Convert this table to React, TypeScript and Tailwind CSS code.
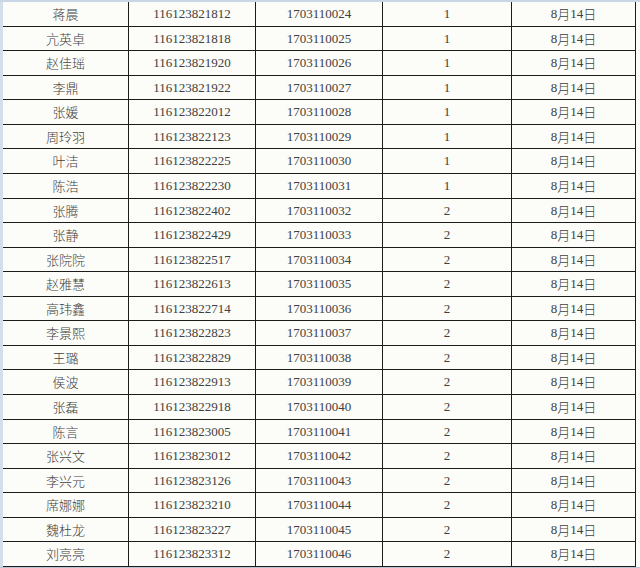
const rows: [string, string, string, string][] = [
  ["蒋晨", "116123821812", "1703110024", "1"],
  ["亢英卓", "116123821818", "1703110025", "1"],
  ["赵佳瑶", "116123821920", "1703110026", "1"],
  ["李鼎", "116123821922", "1703110027", "1"],
  ["张媛", "116123822012", "1703110028", "1"],
  ["周玲羽", "116123822123", "1703110029", "1"],
  ["叶洁", "116123822225", "1703110030", "1"],
  ["陈浩", "116123822230", "1703110031", "1"],
  ["张腾", "116123822402", "1703110032", "2"],
  ["张静", "116123822429", "1703110033", "2"],
  ["张院院", "116123822517", "1703110034", "2"],
  ["赵雅慧", "116123822613", "1703110035", "2"],
  ["高玮鑫", "116123822714", "1703110036", "2"],
  ["李景熙", "116123822823", "1703110037", "2"],
  ["王璐", "116123822829", "1703110038", "2"],
  ["侯波", "116123822913", "1703110039", "2"],
  ["张磊", "116123822918", "1703110040", "2"],
  ["陈言", "116123823005", "1703110041", "2"],
  ["张兴文", "116123823012", "1703110042", "2"],
  ["李兴元", "116123823126", "1703110043", "2"],
  ["席娜娜", "116123823210", "1703110044", "2"],
  ["魏杜龙", "116123823227", "1703110045", "2"],
  ["刘亮亮", "116123823312", "1703110046", "2"],
];

const cell =
  "flex items-center justify-center border-r border-[#1c1c1c] text-[13px] text-[#404040]";
const cjk = "font-['Noto_Sans_CJK_SC',sans-serif] font-light";

export default function App() {
  return (
    <div className="relative flex h-[568px] w-[640px] flex-col overflow-hidden border-t-2 border-b border-t-[#c9d6e6] border-b-[#b9c4d2] bg-[#fcfcf8] pl-[3px] font-['Liberation_Serif','Noto_Sans_CJK_SC',serif]">
      <div className="absolute left-0 top-0 h-[568px] w-[3px] bg-[#d3deeb]" />
      <div className="flex w-[633px] flex-1 flex-col">
        {rows.map(([name, exam, id, room]) => (
          <div
            key={exam}
            className="grid flex-1 grid-cols-[126px_127px_127px_129px_124px] border-b border-[#1c1c1c]"
          >
            <div className={cell + " " + cjk}>{name}</div>
            <div className={cell}>{exam}</div>
            <div className={cell}>{id}</div>
            <div className={cell}>{room}</div>
            <div className={cell}>
              8<span className={cjk}>月</span>14<span className={cjk}>日</span>
            </div>
          </div>
        ))}
      </div>
    </div>
  );
}
